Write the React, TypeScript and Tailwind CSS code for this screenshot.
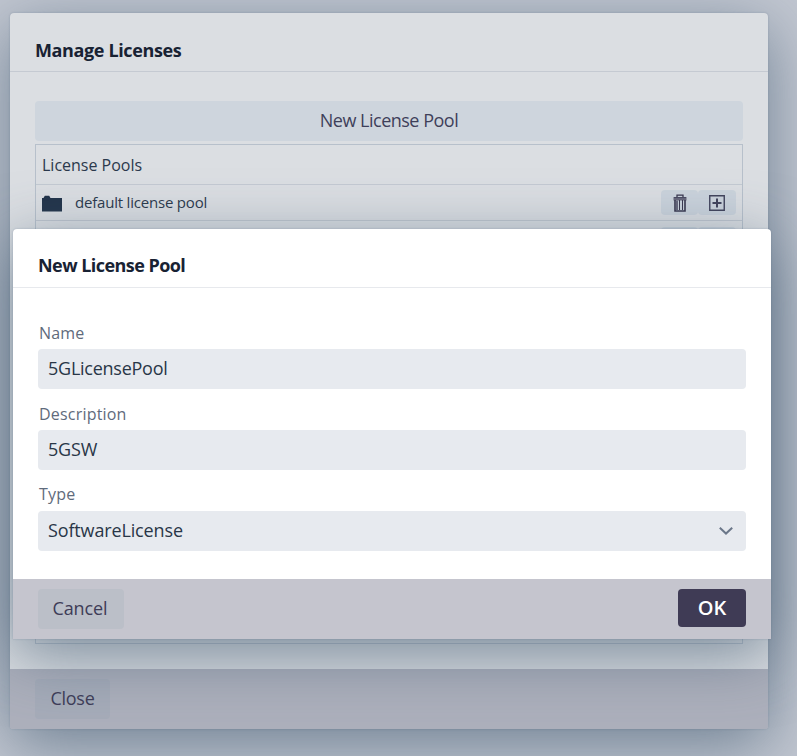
import React from "react";

function Folder() {
  return (
    <svg width="20" height="17" viewBox="0 0 20 17" fill="#22344a" className="mt-px">
      <path d="M0 3h1.5L2.8.8h4.4L8.5 3H20v13.5H0z" />
    </svg>
  );
}

function Trash() {
  return (
    <svg width="14" height="18" viewBox="0 0 14 18" fill="none">
      <path d="M4 3V1.2h6V3" stroke="#39374f" strokeWidth="1.3" />
      <path d="M0.5 3h13v3.5H0.5z" fill="#66667b" />
      <path d="M1 3.5h12" stroke="#4a4a62" />
      <path d="M2 6v11h10V6" stroke="#39374f" strokeWidth="1.6" />
      <path d="M3 6.5h2v9.5H3z" fill="#66667b" />
      <path d="M6.5 6v10M9.5 6v10" stroke="#39374f" />
    </svg>
  );
}

function Plus() {
  return (
    <svg width="16" height="16" viewBox="0 0 16 16" fill="none" stroke="#41435b">
      <path d="M.75.75h14.5v14.5H.75z" strokeWidth="1.4" />
      <path d="M8 3.5v9M3.5 8h9" strokeWidth="2" />
    </svg>
  );
}

function PoolActions() {
  return (
    <div className="flex">
      <button className="flex h-[25px] w-[37px] items-center justify-center rounded bg-[#cbd3dc]"><Trash /></button>
      <button className="flex h-[25px] w-[38px] items-center justify-center rounded bg-[#cbd3dc]"><Plus /></button>
    </div>
  );
}

function Field({ label, value, space, select }: { label: string; value: string; space: string; select?: boolean }) {
  return (
    <div className="flex h-[81px] flex-col">
      <label className={`h-[33px] pl-px text-[16px] leading-[33px] tracking-[0.2px] text-[#5f6b7c] ${select ? "" : "pt-px"}`}>{label}</label>
      <div className="flex h-10 items-center justify-between rounded bg-[#e7eaef] pr-[13px] pl-[10px] text-[18px] text-[#293647]">
        <span className={`pb-[2px] ${space}`}>{value}</span>
        {select && (
          <svg width="14" height="8" viewBox="0 0 14 8" fill="none" stroke="#6b7789" strokeWidth="2">
            <path d="M.8.8 7 6.6 13.2.8" />
          </svg>
        )}
      </div>
    </div>
  );
}

export default function App() {
  return (
    <div className="relative h-[756px] w-[797px] overflow-hidden bg-[#c2c7d1] pt-[13px] pl-[10px] font-['Open_Sans','Noto_Sans',sans-serif] whitespace-nowrap">
      <section className="flex h-[716px] w-[758px] flex-col rounded bg-[#dbdee2] shadow-[0_16px_64px_rgba(66,91,114,0.65),0_0_2px_rgba(56,84,112,0.3)]">
        <header className="flex h-[59px] shrink-0 items-end border-b border-[#c5cad2] pb-[7px] pl-[25px]">
          <h1 className="text-[18px] leading-[27px] font-bold tracking-[-0.37px] text-[#182233]">Manage Licenses</h1>
        </header>
        <div className="flex grow flex-col px-[25px] pt-[29px] pb-[25px]">
          <button className="h-10 shrink-0 rounded bg-[#ced5dd] pb-[2px] text-[18px] tracking-[-0.5px] text-[#3e405a]">New License Pool</button>
          <div className="mt-[3px] grow border border-[#b7c0cb] text-[#2b394c]">
            <div className="flex h-10 items-center border-b border-[#c3c9d2] pl-[6px] text-[16px] tracking-[0px]">License Pools</div>
            <div className="flex h-9 items-center border-b border-[#c0c6cf] pr-[6px] pl-[6px]">
              <Folder />
              <span className="ml-[13px] grow text-[15px] tracking-[-0.2px]">default license pool</span>
              <PoolActions />
            </div>
            <div className="flex h-9 items-center justify-end pr-[6px]"><PoolActions /></div>
          </div>
        </div>
        <footer className="flex h-[60px] shrink-0 items-center rounded-b-[2px] bg-[#adb0bc] pl-[25px]">
          <button className="h-10 w-[75px] rounded bg-[#a6acb9] pb-[2px] text-[18px] tracking-[-0.3px] text-[#3e3c57]">Close</button>
        </footer>
      </section>

      <section className="absolute top-[229px] left-[13px] flex h-[410px] w-[758px] flex-col rounded-t bg-white shadow-[0_16px_64px_rgba(66,91,114,0.65),0_0_2px_rgba(56,84,112,0.3)]">
        <header className="flex h-[59px] shrink-0 items-end border-b border-[#e7e9ed] pb-[8px] pl-[25px]">
          <h2 className="text-[18px] leading-[27px] font-bold tracking-[-0.55px] text-[#182233]">New License Pool</h2>
        </header>
        <div className="flex grow flex-col px-[25px] pt-[28px]">
          <Field label="Name" value="5GLicensePool" space="tracking-[-0.25px]" />
          <Field label="Description" value="5GSW" space="tracking-[-0.2px]" />
          <Field label="Type" value="SoftwareLicense" space="tracking-[-0.14px]" select />
        </div>
        <footer className="flex h-[60px] shrink-0 items-start justify-between bg-[#c5c5ce] px-[25px] pt-[10px]">
          <button className="h-10 w-[86px] rounded bg-[#bbbfc8] pr-[2px] pb-[2px] text-[18px] tracking-[-0.1px] text-[#3e3c57]">Cancel</button>
          <button className="h-[38px] w-[68px] rounded bg-[#3f3b55] text-[20px] font-semibold text-white">OK</button>
        </footer>
      </section>
    </div>
  );
}
